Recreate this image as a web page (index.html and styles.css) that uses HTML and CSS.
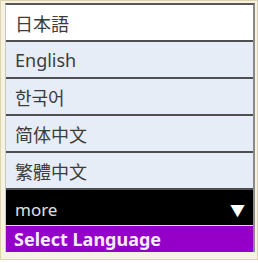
FILE: index.html
```html
<!DOCTYPE html>
<html lang="ja">
<head>
  <meta charset="UTF-8" />
  <meta name="viewport" content="width=device-width, initial-scale=1" />
  <title>Language</title>
  <link rel="stylesheet" href="styles.css">
</head>
<body>
  <div class="frame">
    <ul class="lang-list">
      <li class="lang first" lang="ja">日本語</li>
      <li class="lang" lang="en">English</li>
      <li class="lang" lang="ko">한국어</li>
      <li class="lang" lang="zh-Hans">简体中文</li>
      <li class="lang" lang="zh-Hant">繁體中文</li>
      <li class="more">more <span class="arrow">▼</span></li>
      <li class="select">Select Language</li>
    </ul>
  </div>
</body>
</html>
```

FILE: styles.css
```css
body {
  margin: 0;
  background: #fff;
  font-family: "Noto Sans", "Noto Sans CJK JP", sans-serif;
}
.frame {
  box-sizing: border-box;
  width: 258px;
  height: 260px;
  background: #f7f3e2;
  border: 1px solid #ddd3ad;
  padding: 2px 2px 0 4px;
}
.lang-list {
  list-style: none;
  margin: 0;
  padding: 0;
  border-top: 2px solid #585858;
  border-left: 1px solid #c8c8c8;
  border-right: 2px solid #8a8a8a;
}
.lang {
  height: 35px;
  display: flex;
  align-items: center;
  padding-left: 9px;
  font-size: 18px;
  color: #3c3c3c;
  background: #e7edf7;
  border-bottom: 2px solid #4f4f4f;
}
.lang.first {
  background: #fff;
}
.lang:lang(ko) {
  font-family: "Noto Sans CJK KR", sans-serif;
}
.lang:lang(zh-Hans) {
  font-family: "Noto Sans CJK SC", sans-serif;
}
.lang:lang(zh-Hant) {
  font-family: "Noto Sans CJK TC", sans-serif;
}
.more {
  height: 36px;
  display: flex;
  align-items: center;
  justify-content: space-between;
  padding: 4px 8px 0 9px;
  box-sizing: border-box;
  background: #000;
  color: #e0e0e0;
  font-size: 17px;
  border-bottom: 1px solid #b4e6ee;
}
.arrow {
  color: #fff;
  font-size: 15px;
}
.select {
  height: 26px;
  display: flex;
  align-items: center;
  padding-left: 8px;
  background: #9500c8;
  color: #f4eaff;
  font-size: 18px;
  font-weight: bold;
}
```
